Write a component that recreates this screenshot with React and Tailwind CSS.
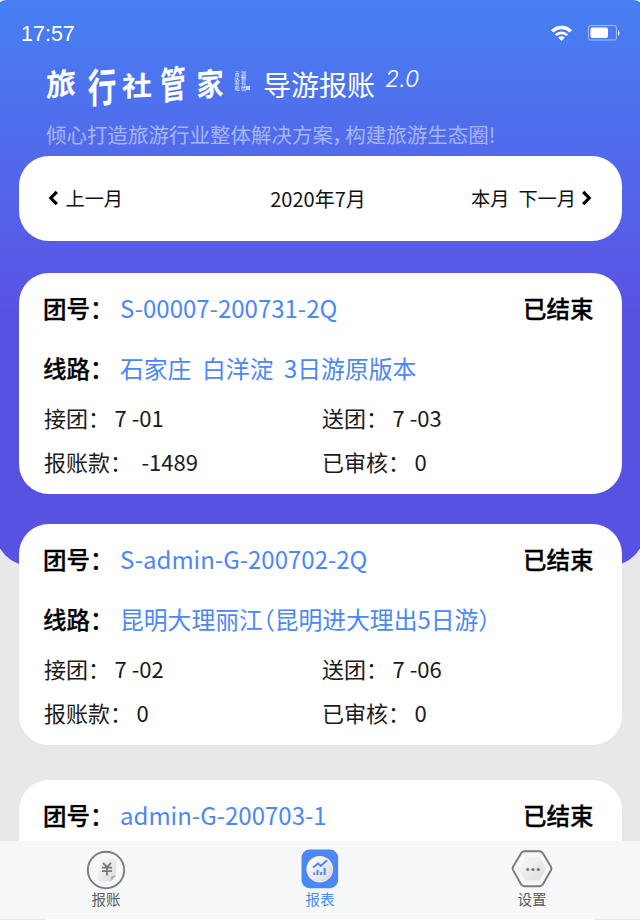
import React from 'react';

const tours = [
  {
    id: 'S-00007-200731-2Q',
    route: '石家庄\u00a0 白洋淀\u00a0 3日游原版本',
    status: '已结束',
    pickup: '7 -01',
    dropoff: '7 -03',
    amount: '\u00a0-1489',
    audited: '0',
  },
  {
    id: 'S-admin-G-200702-2Q',
    route: '昆明大理丽江（昆明进大理出5日游）',
    status: '已结束',
    pickup: '7 -02',
    dropoff: '7 -06',
    amount: '0',
    audited: '0',
  },
  {
    id: 'admin-G-200703-1',
    status: '已结束',
  },
];

function WifiIcon() {
  return (
    <svg width="21" height="16" viewBox="0 0 21 16" fill="none" stroke="#fff" strokeWidth="3.4">
      <path d="M1.2 6.4a13.2 13.2 0 0 1 18.6 0" />
      <path d="M4.800 10.200a8.100 8.100 0 0 1 11.400 0" strokeWidth="2.600" />
      <path d="M10.500 16 7.200 12.600a4.700 4.700 0 0 1 6.600 0z" fill="#fff" stroke="none" />
    </svg>
  );
}

function BatteryIcon() {
  return (
    <svg width="32" height="16" viewBox="0 0 32 16" fill="none">
      <rect x="0.6" y="0.6" width="27.8" height="14.4" rx="1.5" stroke="#fff" strokeOpacity="0.5" />
      <rect x="2.5" y="2.5" width="17.5" height="10.6" rx="2" fill="#fff" />
      <path d="M30 5.2c1.9.5 1.9 4.8 0 5.3z" fill="#fff" />
    </svg>
  );
}

function Chevron({ flip }) {
  return (
    <svg width="10" height="16" viewBox="0 0 10 16" fill="none" stroke="#000" strokeWidth="3.2">
      <path d={flip ? 'M1.200 1.800 7.200 8l-6 6.200' : 'M8.800 1.800 2.800 8l6 6.200'} />
    </svg>
  );
}

function BillIcon() {
  return (
    <svg width="40" height="40" viewBox="0 0 40 40" fill="none">
      <defs>
        <linearGradient id="bill" x1="0" y1="0" x2="1" y2="1">
          <stop offset="0" stopColor="#fbfbfb" />
          <stop offset="1" stopColor="#d9d9d9" />
        </linearGradient>
      </defs>
      <circle cx="20" cy="20" r="18.200" stroke="#7b7b7b" strokeWidth="1.900" />
      <path d="M14.300 8.700h13.400a2.300 2.300 0 0 1 2.300 2.300v14.700l-5.300 5.600h-10.400a2.300 2.300 0 0 1-2.300-2.300V11a2.300 2.300 0 0 1 2.300-2.300z" fill="url(#bill)" />
      <path d="M24.700 31.300v-3.300a2.300 2.300 0 0 1 2.300-2.300h3z" fill="#b0b0b0" />
      <path d="m17 12.800 4 4.400 4-4.400M16 17.600h10M16 21.200h10M21 17.200v8.400" stroke="#777" strokeWidth="1.800" />
    </svg>
  );
}

function ReportIcon() {
  return (
    <svg width="40" height="40" viewBox="0 0 40 40" fill="none">
      <defs>
        <linearGradient id="report" x1="0" y1="0" x2="1" y2="1">
          <stop offset="0.2" stopColor="#fafafa" />
          <stop offset="1" stopColor="#d6d6d6" />
        </linearGradient>
      </defs>
      <rect x="1.500" y="0.600" width="36.600" height="38.600" rx="8" fill="#4c87f6" />
      <circle cx="19.800" cy="20.200" r="13.300" fill="url(#report)" />
      <path d="m13.600 18 4.400-3.600 2.800 2.600 5.600-5.200" stroke="#4c87f6" strokeWidth="2" strokeLinecap="round" strokeLinejoin="round" />
      <path d="M14.200 23.500v2.600M17.600 20.800v5.300M21.200 23v3.100M24.700 18.800v7.300" stroke="#4c87f6" strokeWidth="2" />
    </svg>
  );
}

function SettingsIcon() {
  return (
    <svg width="42" height="40" viewBox="0 0 42 40" fill="none">
      <defs>
        <linearGradient id="settings" x1="0" y1="0" x2="1" y2="1">
          <stop offset="0" stopColor="#fafafa" />
          <stop offset="1" stopColor="#dcdcdc" />
        </linearGradient>
      </defs>
      <path d="M13.500 2.200h15a4 4 0 0 1 3.400 2l7.900 13.200a4 4 0 0 1 0 4l-7.900 13.800a4 4 0 0 1-3.400 2h-15a4 4 0 0 1-3.400-2L2.200 21.400a4 4 0 0 1 0-4l7.900-13.200a4 4 0 0 1 3.400-2z" stroke="#7b7b7b" strokeWidth="1.900" />
      <path d="M16 8h10.500a3.500 3.500 0 0 1 3 1.700l4.500 8.300a3.500 3.500 0 0 1 0 3.400l-4.500 8.300a3.500 3.500 0 0 1-3 1.700H16a3.500 3.500 0 0 1-3-1.700l-4.500-8.300a3.500 3.500 0 0 1 0-3.400L13 9.700a3.500 3.500 0 0 1 3-1.700z" fill="url(#settings)" />
      <g fill="#777">
        <circle cx="16.700" cy="20.500" r="1.600" />
        <circle cx="22" cy="20.500" r="1.600" />
        <circle cx="27.300" cy="20.500" r="1.600" />
      </g>
    </svg>
  );
}

function Brand() {
  return (
    <div className="flex h-[48px] items-start pl-[46px] text-white">
      {/* brush-style product name, every character has its own proportions */}
      <div className="grid w-[187px] grid-cols-[41px_35px_37px_37px_37px] text-[30px] font-bold leading-[44px]">
        <span className="w-[30px] -skew-y-6">旅</span>
        <span className="w-[30px] translate-y-[3px] -skew-y-3 scale-x-95 scale-y-[1.35]">行</span>
        <span className="w-[30px] translate-y-[2px] -skew-y-3 scale-y-90">社</span>
        <span className="w-[30px] translate-x-[-1px] -skew-y-6 scale-x-85 scale-y-[1.25]">管</span>
        <span className="w-[30px] translate-x-[-1px] -skew-y-3 scale-x-90 scale-y-105">家</span>
      </div>
      <div className="mt-[11px] flex w-[30px] items-end">
        <div className="h-[21px] w-[13px] text-[5px] leading-[6.500px] [writing-mode:vertical-rl]">
          <span>润物有情<br />吉庆有和</span>
        </div>
        <span className="mb-[2px] h-[4px] w-[4px] bg-white/70" />
      </div>
      <div className="pt-[2px] text-[28px] leading-[44px]">导游报账</div>
      <div className="ml-[10px] mt-[3.500px] font-['Inter',sans-serif] text-[23px] font-light italic leading-[30px]">2.0</div>
    </div>
  );
}

function Field({ label, value }) {
  return (
    <div className="flex gap-[4.500px]">
      <span className="whitespace-pre">{label}：</span>
      <span className="whitespace-pre">{value}</span>
    </div>
  );
}

function TourCard({ tour }) {
  return (
    <div className="h-[221px] shrink-0 rounded-[30px] bg-white pl-[24.500px] pr-[28px] pt-[17px] text-[24px] leading-[36px] text-black">
      <div className="flex">
        <span className="w-[77px] text-[23.500px] font-medium [-webkit-text-stroke:0.300px_black]">团号：</span>
        <span className="flex-1 text-[#4c87f6]">{tour.id}</span>
        <span className="text-[23.500px] font-medium [-webkit-text-stroke:0.300px_black]">{tour.status}</span>
      </div>
      {tour.route && (
        <>
          <div className="mt-[23.500px] flex">
            <span className="w-[77px] text-[23.500px] font-medium [-webkit-text-stroke:0.300px_black]">线路：</span>
            <span className="text-[23.800px] text-[#4c87f6] [font-feature-settings:'halt']">{tour.route}</span>
          </div>
          <div className="mt-[15px] grid grid-cols-[278px_1fr] gap-y-[12.500px] pl-[1px] text-[22px] leading-[32px] text-[#1a1a1a]">
            <Field label="接团" value={tour.pickup} />
            <Field label="送团" value={tour.dropoff} />
            <Field label="报账款" value={tour.amount} />
            <Field label="已审核" value={tour.audited} />
          </div>
        </>
      )}
    </div>
  );
}

function App() {
  return (
    <div
      className="relative flex h-[920px] w-[640px] flex-col overflow-hidden bg-[#e8e8e8] font-['Noto_Sans_CJK_SC',sans-serif]"
      lang="zh-CN"
    >
      <div className="absolute inset-x-[-5px] top-0 h-[566px] rounded-b-[36px] rounded-t-[12px] bg-linear-to-b from-[#467ff2] from-0% to-[#5852e3] to-55%" />
      <div className="relative flex min-h-0 flex-1 flex-col">
        <div className="flex h-[60px] items-center pl-[21px] pr-[20px] pt-[6px] text-white">
          <span className="flex-1 pt-[2px] font-['Liberation_Sans',sans-serif] text-[21.500px]">17:57</span>
          <WifiIcon />
          <div className="w-[16px]" />
          <BatteryIcon />
        </div>
        <Brand />
        <div className="h-[48px] pl-[46px] pt-[10px] text-[20.500px] leading-[32px] text-white/50">
          倾心打造旅游行业整体解决方案<span className="-ml-px mr-[3px] [font-feature-settings:'halt']">，</span>构建旅游生态圈!
        </div>
        <div className="mx-[18.500px] flex h-[85px] shrink-0 items-center rounded-[30px] bg-white px-[29px] text-[19.200px] text-[#111]">
          <div className="flex flex-1 items-center gap-[8px]">
            <Chevron />
            <span>上一月</span>
          </div>
          <span className="mr-[3px] text-[20px]">2020年7月</span>
          <div className="flex flex-1 items-center justify-end pr-px">
            <span className="mr-[9px]">本月</span>
            <span className="mr-[5.500px]">下一月</span>
            <Chevron flip />
          </div>
        </div>
        <div className="mx-[18.500px] mt-[32px] flex min-h-0 flex-1 flex-col overflow-hidden">
          {tours.map((tour, index) => (
            <div key={tour.id} className={index === 1 ? 'mb-[35px]' : 'mb-[30px]'}>
              <TourCard tour={tour} />
            </div>
          ))}
        </div>
      </div>
      <div className="relative flex h-[78px] shrink-0 bg-[#f5f7f9] text-[14.500px] leading-[20px] text-[#5c5c5c]">
        <div className="flex w-[212px] flex-col items-center pt-[9px]">
          <BillIcon />
          <span className="-mt-px">报账</span>
        </div>
        <div className="flex w-[216px] flex-col items-center pt-[8px] text-[#4c87f6]">
          <ReportIcon />
          <span>报表</span>
        </div>
        <div className="flex flex-1 flex-col items-center pr-[4px] pt-[8px]">
          <SettingsIcon />
          <span>设置</span>
        </div>
      </div>
      <div className="relative h-px shrink-0 px-[45px]">
        <div className="h-px bg-white" />
      </div>
    </div>
  );
}

export default App;
